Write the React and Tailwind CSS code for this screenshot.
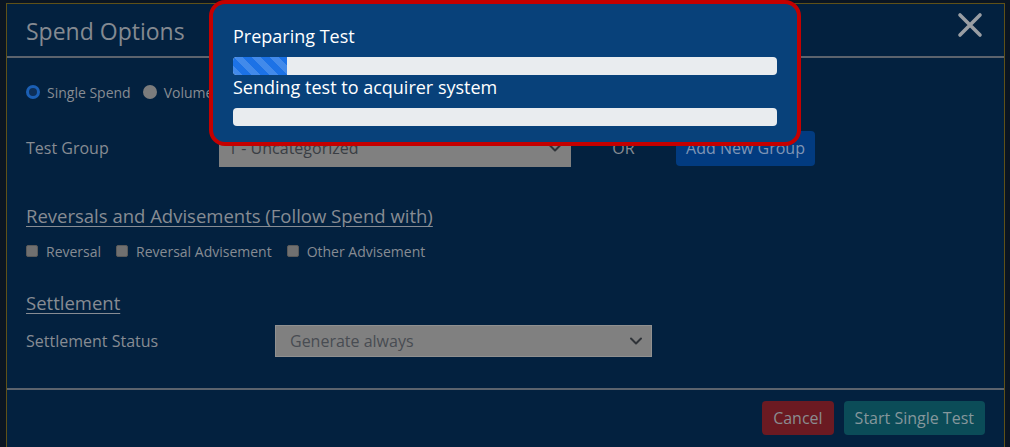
import React from "react";

const font = { fontFamily: "'Open Sans', Lato, Arial, sans-serif" };

function Radio({ checked, label }) {
  return (
    <label className="flex items-center gap-[7px]">
      {checked ? (
        <span className="w-[14px] h-[14px] rounded-full border-[3px] border-[#1b5fb4] bg-[#0d2f58] flex items-center justify-center" />
      ) : (
        <span className="w-[14px] h-[14px] rounded-full bg-[#7c7c7c]" />
      )}
      <span className="text-[14px] text-[#878c93] whitespace-nowrap">{label}</span>
    </label>
  );
}

function Check({ label }) {
  return (
    <label className="flex items-center gap-[8px]">
      <span className="w-[12px] h-[12px] rounded-[2px] bg-[#707070] border border-[#5a5a5a]" />
      <span className="text-[14px] text-[#878c93]">{label}</span>
    </label>
  );
}

function Chevron() {
  return (
    <svg width="14" height="10" viewBox="0 0 14 10" fill="none">
      <path d="M2 2.5 L7 7.5 L12 2.5" stroke="#2f3338" strokeWidth="2" strokeLinecap="round" strokeLinejoin="round" />
    </svg>
  );
}

function ProgressBar({ value }) {
  return (
    <div className="w-full h-[18px] rounded-[4px] bg-[#e9ecef] overflow-hidden flex">
      {value > 0 && (
        <div
          className="h-full bg-[#1c72e6] bg-[linear-gradient(45deg,rgba(255,255,255,.17)_25%,transparent_25%,transparent_50%,rgba(255,255,255,.17)_50%,rgba(255,255,255,.17)_75%,transparent_75%,transparent)] bg-[length:18px_18px]"
          style={{ width: `${value}%` }}
        />
      )}
    </div>
  );
}

export default function App() {
  return (
    <div className="w-[1010px] h-[447px] bg-[#0a1522] overflow-hidden relative" style={font}>
      <div className="ml-[6px] mt-[3px] w-[999px] h-[444px] bg-[#03213f] border-x border-t border-[#5f5118] flex flex-col">
        {/* Header */}
        <div className="h-[54px] flex items-center justify-between pl-[19px] pr-[21px] border-b-2 border-[#5c636d]">
          <h1 className="text-[23px] text-[#858a91] leading-none mt-[2px]">Spend Options</h1>
          <svg width="26" height="26" viewBox="0 0 26 26" className="-mt-[10px]">
            <path d="M3 3 L23 23 M23 3 L3 23" stroke="#9a9ea3" strokeWidth="3.6" strokeLinecap="round" />
          </svg>
        </div>

        {/* Body */}
        <div className="h-[330px] pl-[19px] pt-[24px] flex flex-col">
          <div className="flex items-center gap-[12px] h-[20px]">
            <Radio checked label="Single Spend" />
            <Radio label="Volume Spend" />
          </div>

          <div className="flex items-center mt-[27px] h-[38px]">
            <div className="w-[193px] text-[16px] text-[#878c93]">Test Group</div>
            <div className="w-[352px] h-[38px] bg-[#808080] flex items-center justify-between px-[9px] text-[16px] text-[#3a3e44]">
              <span>1 - Uncategorized</span>
              <Chevron />
            </div>
            <div className="w-[105px] text-center text-[16px] text-[#878c93]">OR</div>
            <div className="w-[139px] h-[35px] rounded-[4px] bg-[#023b80] flex items-center justify-center text-[16px] text-[#7f95b5]">
              Add New Group
            </div>
          </div>

          <div className="mt-[37px] h-[24px] text-[18.5px] text-[#878c93] underline underline-offset-[3px] leading-[24px]">
            Reversals and Advisements (Follow Spend with)
          </div>

          <div className="mt-[13px] h-[20px] flex items-center gap-[15px]">
            <Check label="Reversal" />
            <Check label="Reversal Advisement" />
            <Check label="Other Advisement" />
          </div>

          <div className="mt-[30px] h-[24px] text-[18.5px] text-[#878c93] underline underline-offset-[3px] leading-[24px]">
            Settlement
          </div>

          <div className="mt-[10px] flex items-center h-[32px]">
            <div className="w-[249px] text-[16px] text-[#878c93]">Settlement Status</div>
            <div className="w-[377px] h-[32px] bg-[#808080] border border-[#909090] flex items-center justify-between pl-[14px] pr-[8px] text-[16px] text-[#484c52]">
              <span>Generate always</span>
              <Chevron />
            </div>
          </div>
        </div>

        {/* Footer */}
        <div className="border-t-2 border-[#5c636d] flex-1 flex items-start justify-end gap-[10px] pt-[11px] pr-[19px]">
          <button className="h-[34px] px-[11px] rounded-[4px] bg-[#6b1a22] text-[16px] text-[#8a8c90]">Cancel</button>
          <button className="h-[34px] px-[11px] rounded-[4px] bg-[#0b4c58] text-[16px] text-[#85979c]">Start Single Test</button>
        </div>
      </div>

      {/* Progress popup */}
      <div className="absolute left-[209px] top-0 w-[592px] h-[146px] rounded-[16px] border-4 border-[#c40000] bg-[#08417a] pt-[20px] pl-[20px] pr-[20px]">
        <div className="text-[18px] leading-[24px] text-white">Preparing Test</div>
        <div className="mt-[9px]">
          <ProgressBar value={10} />
        </div>
        <div className="text-[18px] leading-[24px] text-white">Sending test to acquirer system</div>
        <div className="mt-[9px]">
          <ProgressBar value={0} />
        </div>
      </div>
    </div>
  );
}
